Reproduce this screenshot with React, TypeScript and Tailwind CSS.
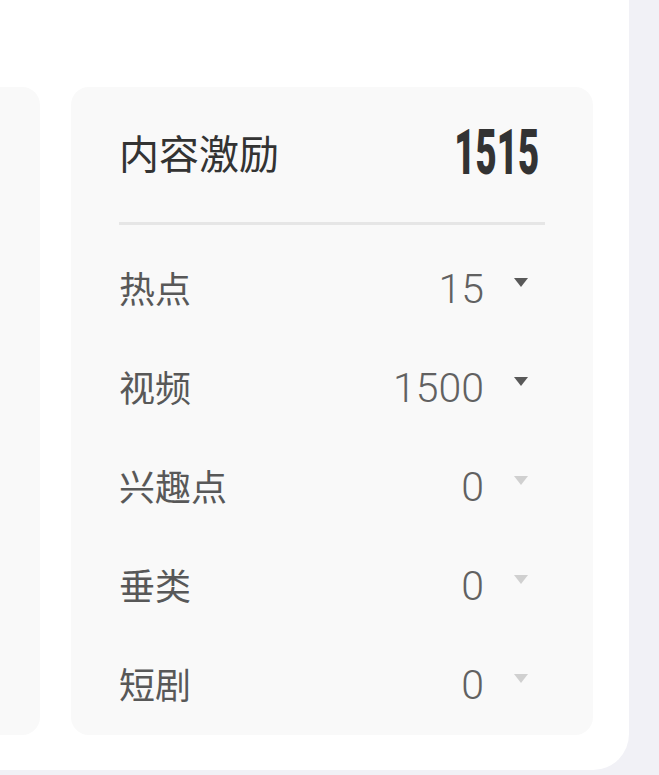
import clsx from "clsx";

const ROWS = [
  { label: "热点", value: 15 },
  { label: "视频", value: 1500 },
  { label: "兴趣点", value: 0 },
  { label: "垂类", value: 0 },
  { label: "短剧", value: 0 },
];

const cjk = "font-['Noto_Sans_CJK_SC','Noto_Sans',sans-serif]";

function Caret({ active }: { active: boolean }) {
  return (
    <span
      className={clsx(
        "block w-0 h-0 shrink-0 ml-[30px] mr-[17px] mb-[15px] border-l-[7px] border-r-[7px] border-t-[9px] border-l-transparent border-r-transparent",
        active ? "border-t-[#595959]" : "border-t-[#d0d0d0]"
      )}
    />
  );
}

export default function App() {
  return (
    <div className="w-[659px] h-[775px] bg-[#f1f1f6] overflow-hidden">
      <div className="w-[629px] h-[770px] bg-white rounded-br-[36px] flex gap-[31px] pt-[87px]">
        {/* left card, mostly cut off */}
        <div className="w-[100px] -ml-[60px] h-[648px] bg-[#f9f9f9] rounded-r-[18px] shrink-0" />

        {/* Content incentive card */}
        <div className="w-[522px] h-[648px] bg-[#f9f9f9] rounded-[18px] px-[48px] flex flex-col shrink-0">
          <div className="h-[135px] flex items-center justify-between">
            <span className={clsx(cjk, "text-[40px] leading-none text-[#333] mb-[6px]")}>内容激励</span>
            <span className="inline-block font-['Roboto',sans-serif] font-black text-[63px] leading-none text-[#333] scale-x-[0.58] origin-right mr-[6px] -mt-[5px]">
              1515
            </span>
          </div>
          <div className="h-[3px] bg-[#e6e6e6]" />
          <div className="mt-[15px] flex flex-col">
            {ROWS.map((r) => (
              <div key={r.label} className="h-[99px] flex items-center">
                <span className={clsx(cjk, "flex-1 text-[36px] leading-none text-[#585858] mb-[6px]")}>{r.label}</span>
                <span className="font-['Roboto',sans-serif] font-light text-[41px] leading-none text-[#616161]">{r.value}</span>
                <Caret active={r.value > 0} />
              </div>
            ))}
          </div>
        </div>
      </div>
    </div>
  );
}
